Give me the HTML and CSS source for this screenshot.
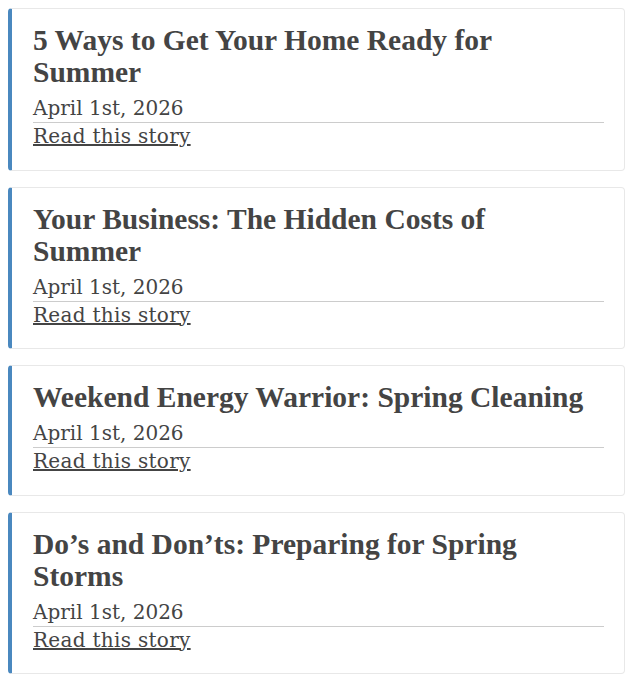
FILE: index.html
```html
<!DOCTYPE html>
<html lang="en">
<head>
    <meta charset="UTF-8">
    <meta name="viewport" content="width=device-width, initial-scale=1.0">
    <title>Stories</title>
    <link rel="stylesheet" href="styles.css">
</head>
<body>
    <div class="story-list">
        <div class="story">
            <h3 class="story-title">5 Ways to Get Your Home Ready for Summer</h3>
            <div class="story-date">April 1st, 2026</div>
            <a href="#" class="story-link">Read this story</a>
        </div>

        <div class="story">
            <h3 class="story-title">Your Business: The Hidden Costs of Summer</h3>
            <div class="story-date">April 1st, 2026</div>
            <a href="#" class="story-link">Read this story</a>
        </div>

        <div class="story">
            <h3 class="story-title">Weekend Energy Warrior: Spring Cleaning</h3>
            <div class="story-date">April 1st, 2026</div>
            <a href="#" class="story-link">Read this story</a>
        </div>

        <div class="story">
            <h3 class="story-title">Do’s and Don’ts: Preparing for Spring Storms</h3>
            <div class="story-date">April 1st, 2026</div>
            <a href="#" class="story-link">Read this story</a>
        </div>
    </div>
</body>
</html>
```

FILE: styles.css
```css
body {
    margin: 8px;
    background: #fff;
    color: #444;
}
.story-list {
    display: flex;
    flex-direction: column;
    gap: 16px;
}
.story {
    border: 1px solid #e8e8e8;
    border-left: 4px solid #4a88bf;
    border-radius: 4px;
    padding: 15px 20px 20.5px 21px;
    background: #fff;
    font-family: "DejaVu Serif", serif;
    font-size: 20px;
    line-height: 26px;
}
.story-title {
    margin: 0 0 7px 0;
    padding-right: 16px;
    font-family: "Liberation Serif", serif;
    font-size: 29.5px;
    line-height: 32px;
    font-weight: 700;
    color: #444;
}
.story-date {
    line-height: 27px;
    border-bottom: 1px solid #ccc;
}
.story-link {
    display: inline-block;
    letter-spacing: 0.3px;
    color: #444;
    text-decoration: underline;
}
```
